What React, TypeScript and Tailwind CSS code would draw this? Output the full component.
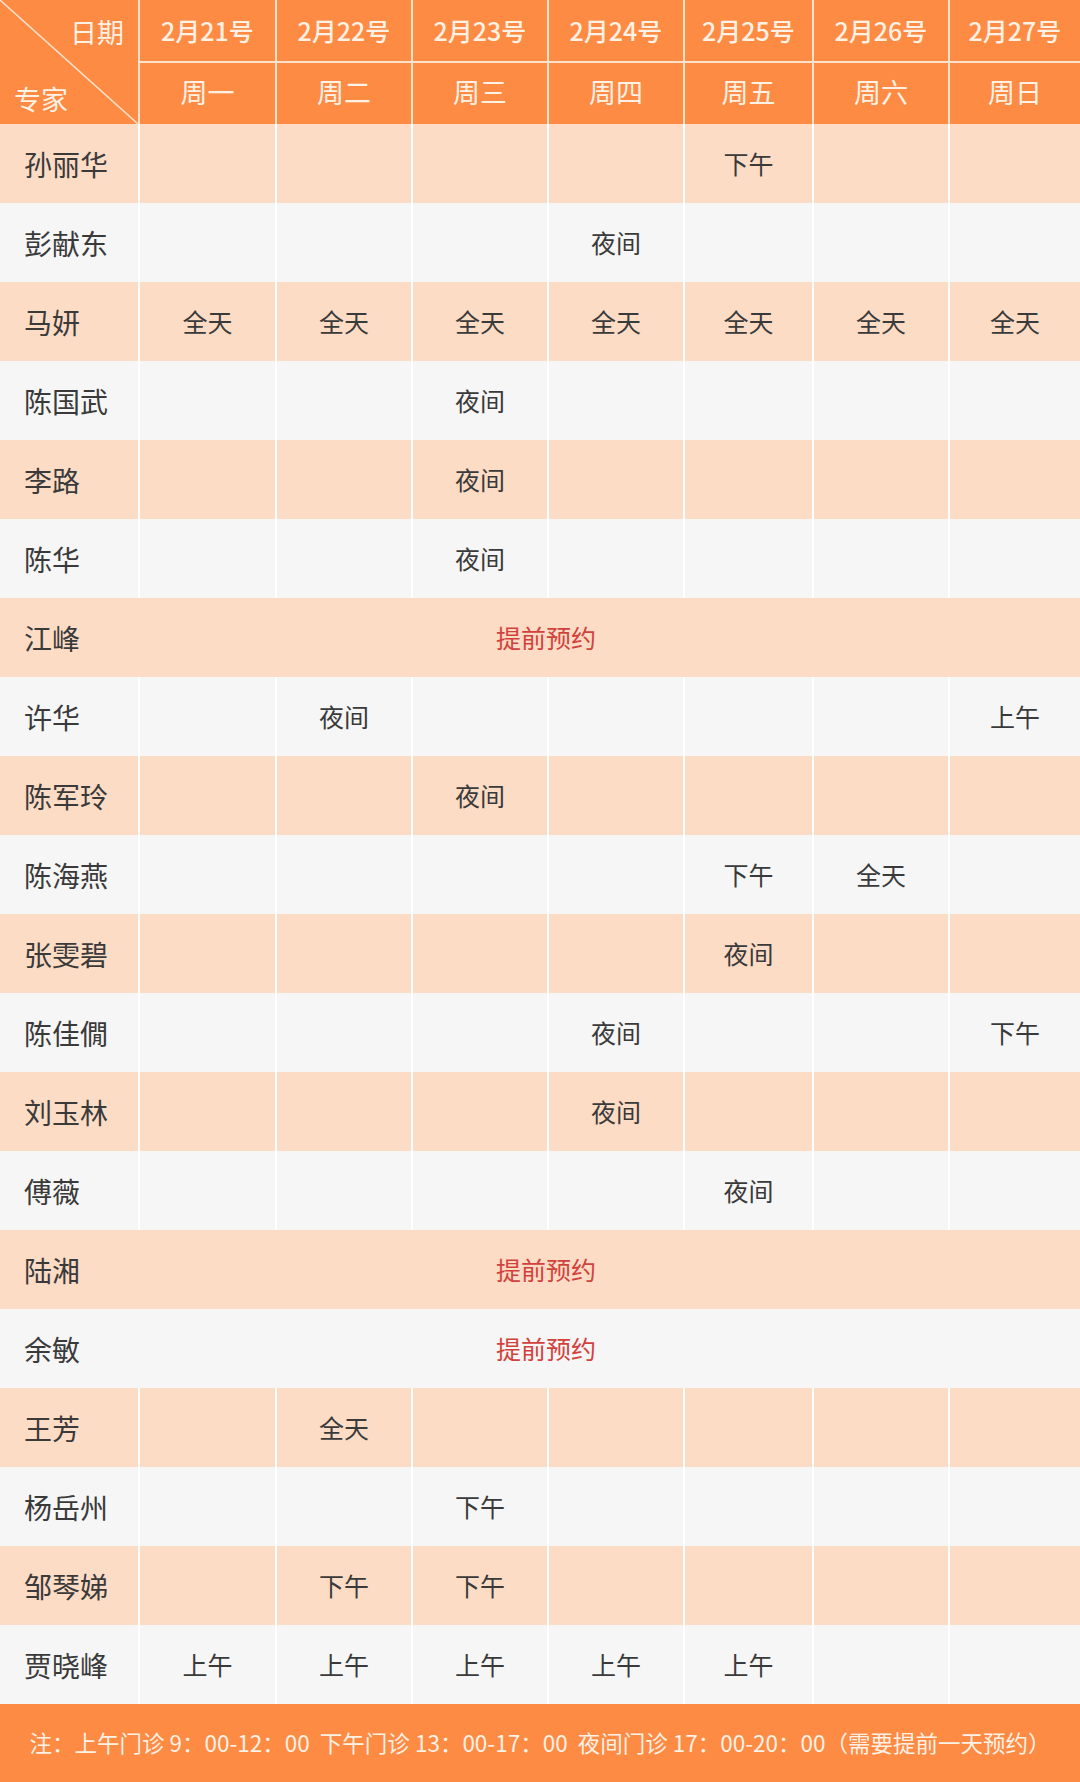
import React from "react";

const days = [
  { date: "2月21号", week: "周一" },
  { date: "2月22号", week: "周二" },
  { date: "2月23号", week: "周三" },
  { date: "2月24号", week: "周四" },
  { date: "2月25号", week: "周五" },
  { date: "2月26号", week: "周六" },
  { date: "2月27号", week: "周日" },
];

// each row: name + 7 slots, or "book" for 提前预约 across the week
type Row = { name: string; slots?: string[]; book?: boolean };

const rows: Row[] = [
  { name: "孙丽华", slots: ["", "", "", "", "下午", "", ""] },
  { name: "彭献东", slots: ["", "", "", "夜间", "", "", ""] },
  { name: "马妍", slots: ["全天", "全天", "全天", "全天", "全天", "全天", "全天"] },
  { name: "陈国武", slots: ["", "", "夜间", "", "", "", ""] },
  { name: "李路", slots: ["", "", "夜间", "", "", "", ""] },
  { name: "陈华", slots: ["", "", "夜间", "", "", "", ""] },
  { name: "江峰", book: true },
  { name: "许华", slots: ["", "夜间", "", "", "", "", "上午"] },
  { name: "陈军玲", slots: ["", "", "夜间", "", "", "", ""] },
  { name: "陈海燕", slots: ["", "", "", "", "下午", "全天", ""] },
  { name: "张雯碧", slots: ["", "", "", "", "夜间", "", ""] },
  { name: "陈佳僩", slots: ["", "", "", "夜间", "", "", "下午"] },
  { name: "刘玉林", slots: ["", "", "", "夜间", "", "", ""] },
  { name: "傅薇", slots: ["", "", "", "", "夜间", "", ""] },
  { name: "陆湘", book: true },
  { name: "余敏", book: true },
  { name: "王芳", slots: ["", "全天", "", "", "", "", ""] },
  { name: "杨岳州", slots: ["", "", "下午", "", "", "", ""] },
  { name: "邹琴娣", slots: ["", "下午", "下午", "", "", "", ""] },
  { name: "贾晓峰", slots: ["上午", "上午", "上午", "上午", "上午", "", ""] },
];

const cols = "grid grid-cols-[138px_135px_134px_134px_134px_127px_134px_1fr] gap-x-[2px]";
const font = { fontFamily: '"Noto Sans CJK SC", "Noto Sans", sans-serif' };

function Header() {
  return (
    <div className={`${cols} h-[124px] bg-[#fde3cb]`}>
      <div className="relative bg-[#fd8b44] overflow-hidden">
        <svg className="absolute inset-0 w-full h-full" viewBox="0 0 138 124" preserveAspectRatio="none">
          <line x1="0" y1="0" x2="138" y2="124" stroke="#fde3cb" strokeWidth="1.5" />
        </svg>
        <span className="absolute right-[14px] top-[18px] text-[27px] leading-none text-[#fff1e4]">日期</span>
        <span className="absolute left-[14px] bottom-[12px] text-[27px] leading-none text-[#fff1e4]">专家</span>
      </div>
      {days.map((d) => (
        <div key={d.date} className="flex flex-col gap-y-[2px]">
          <div className="h-[61px] bg-[#fd8b44] flex items-center justify-center text-[25px] font-medium text-[#fff1e4] pt-[1px]">
            {d.date}
          </div>
          <div className="flex-1 bg-[#fd8b44] flex items-center justify-center text-[27px] text-[#fff1e4] pb-[2px]">
            {d.week}
          </div>
        </div>
      ))}
    </div>
  );
}

function ScheduleRow({ row, idx }: { row: Row; idx: number }) {
  const bg = idx % 2 === 0 ? "bg-[#fddcc6]" : "bg-[#f6f6f6]";
  return (
    <div className={`${cols} h-[79px] bg-white`}>
      <div className={`${bg} flex items-center pl-[24px] text-[28px] text-[#3a3a3a]`}>{row.name}</div>
      {row.book ? (
        <div className={`${bg} col-span-7 -ml-[2px] flex items-center justify-center pr-[126px] text-[25px] text-[#d2423c]`}>
          提前预约
        </div>
      ) : (
        row.slots!.map((s, i) => (
          <div key={i} className={`${bg} flex items-center justify-center text-[25px] text-[#3a3a3a]`}>
            {s}
          </div>
        ))
      )}
    </div>
  );
}

export default function App() {
  return (
    <div className="w-[1080px] h-[1782px] flex flex-col bg-white" style={font}>
      <Header />
      {rows.map((r, i) => (
        <ScheduleRow key={r.name} row={r} idx={i} />
      ))}
      <div className="flex-1 bg-[#fd8b44] flex items-center justify-center text-[22.5px] text-[#fff1e4] whitespace-pre">
        注：上午门诊 9：00-12：00  下午门诊 13：00-17：00  夜间门诊 17：00-20：00（需要提前一天预约）
      </div>
    </div>
  );
}
